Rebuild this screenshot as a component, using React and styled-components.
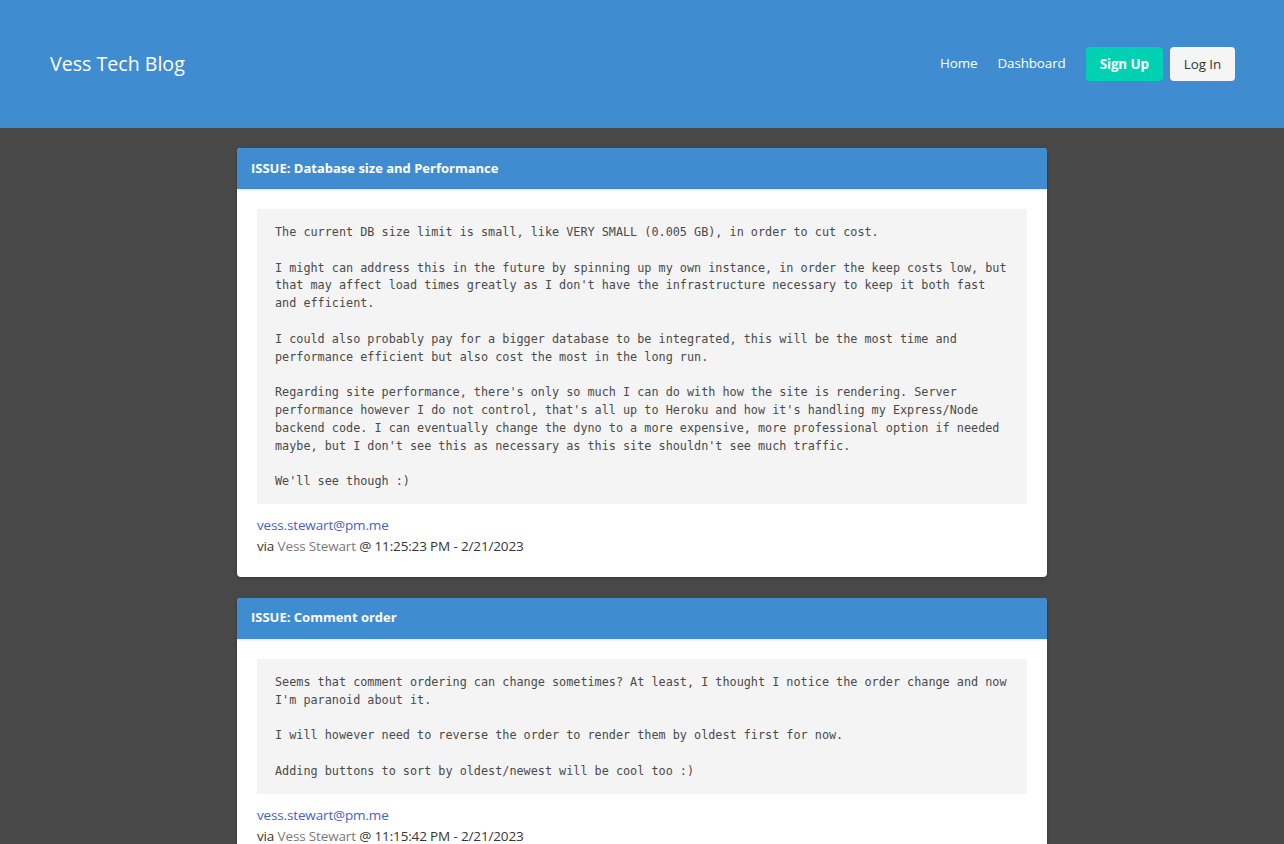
import React from "react";
import styled, { createGlobalStyle } from "styled-components";

const Global = createGlobalStyle`
  html, body { margin: 0; padding: 0; }
  body {
    background: #484848;
    font-family: "Open Sans", "Noto Sans", sans-serif;
    color: #4a4a4a;
    font-size: 14px;
  }
`;

const Header = styled.header`
  height: 128px;
  background: #3f8dd0;
  display: flex;
  align-items: center;
  justify-content: space-between;
  padding: 0 49px 0 50px;
  box-sizing: border-box;
`;

const Brand = styled.h1`
  margin: 0 0 1px;
  font-size: 19.6px;
  font-weight: 400;
  color: #fff;
`;

const Nav = styled.nav`
  display: flex;
  align-items: center;
`;

const NavLink = styled.a`
  color: #fff;
  font-size: 13.4px;
  letter-spacing: -0.1px;
  text-decoration: none;
  margin-right: 20px;
  margin-top: -2px;
`;

const Button = styled.button`
  height: 34px;
  border-radius: 4px;
  border: none;
  font-family: inherit;
  font-size: 13.4px;
  letter-spacing: -0.1px;
  padding: 0 14px;
  margin-left: ${(p) => (p.$first ? "0" : "7px")};
  background: ${(p) => (p.$primary ? "#00d1b2" : "#f5f5f5")};
  color: ${(p) => (p.$primary ? "#fff" : "#363636")};
  font-weight: ${(p) => (p.$primary ? 700 : 400)};
  cursor: pointer;
`;

const Main = styled.main`
  display: flex;
  flex-direction: column;
  align-items: center;
  padding-top: 20px;
  gap: 21px;
`;

const Card = styled.article`
  width: 810px;
  background: #fff;
  border-radius: 4px;
  overflow: hidden;
  box-shadow: 0 1px 3px rgba(0, 0, 0, 0.25);
`;

const CardHeader = styled.div`
  height: 41px;
  background: #3f8dd0;
  color: #fff;
  font-weight: 700;
  font-size: 13px;
  display: flex;
  align-items: center;
  padding: 0 14px 2px;
  box-sizing: border-box;
  box-shadow: 0 1px 2px rgba(0, 0, 0, 0.12);
`;

const CardBody = styled.div`
  padding: 20px;
`;

const Pre = styled.pre`
  margin: 0 0 11px;
  background: #f4f4f4;
  color: #4a4a4a;
  font-family: "DejaVu Sans Mono", monospace;
  font-size: 11.8px;
  line-height: 17.8px;
  padding: 15px 18px 13px;
  white-space: pre-wrap;
`;

const Meta = styled.div`
  font-size: 13.5px;
  letter-spacing: -0.15px;
  line-height: 21px;
  color: #363636;
`;

const Email = styled.a`
  display: block;
  color: #485fc7;
  text-decoration: none;
`;

const Author = styled.span`
  color: #7a7a7a;
`;

const posts = [
  {
    title: "ISSUE: Database size and Performance",
    body: `The current DB size limit is small, like VERY SMALL (0.005 GB), in order to cut cost.

I might can address this in the future by spinning up my own instance, in order the keep costs low, but
that may affect load times greatly as I don't have the infrastructure necessary to keep it both fast
and efficient.

I could also probably pay for a bigger database to be integrated, this will be the most time and
performance efficient but also cost the most in the long run.

Regarding site performance, there's only so much I can do with how the site is rendering. Server
performance however I do not control, that's all up to Heroku and how it's handling my Express/Node
backend code. I can eventually change the dyno to a more expensive, more professional option if needed
maybe, but I don't see this as necessary as this site shouldn't see much traffic.

We'll see though :)`,
    time: "11:25:23 PM - 2/21/2023",
  },
  {
    title: "ISSUE: Comment order",
    body: `Seems that comment ordering can change sometimes? At least, I thought I notice the order change and now
I'm paranoid about it.

I will however need to reverse the order to render them by oldest first for now.

Adding buttons to sort by oldest/newest will be cool too :)`,
    time: "11:15:42 PM - 2/21/2023",
  },
];

export default function App() {
  return (
    <>
      <Global />
      <Header>
        <Brand>Vess Tech Blog</Brand>
        <Nav>
          <NavLink href="#">Home</NavLink>
          <NavLink href="#">Dashboard</NavLink>
          <Button $primary $first>Sign Up</Button>
          <Button>Log In</Button>
        </Nav>
      </Header>
      <Main>
        {posts.map((p) => (
          <Card key={p.title}>
            <CardHeader>{p.title}</CardHeader>
            <CardBody>
              <Pre>{p.body}</Pre>
              <Meta>
                <Email href="#">vess.stewart@pm.me</Email>
                via <Author>Vess Stewart</Author> @ {p.time}
              </Meta>
            </CardBody>
          </Card>
        ))}
      </Main>
    </>
  );
}
